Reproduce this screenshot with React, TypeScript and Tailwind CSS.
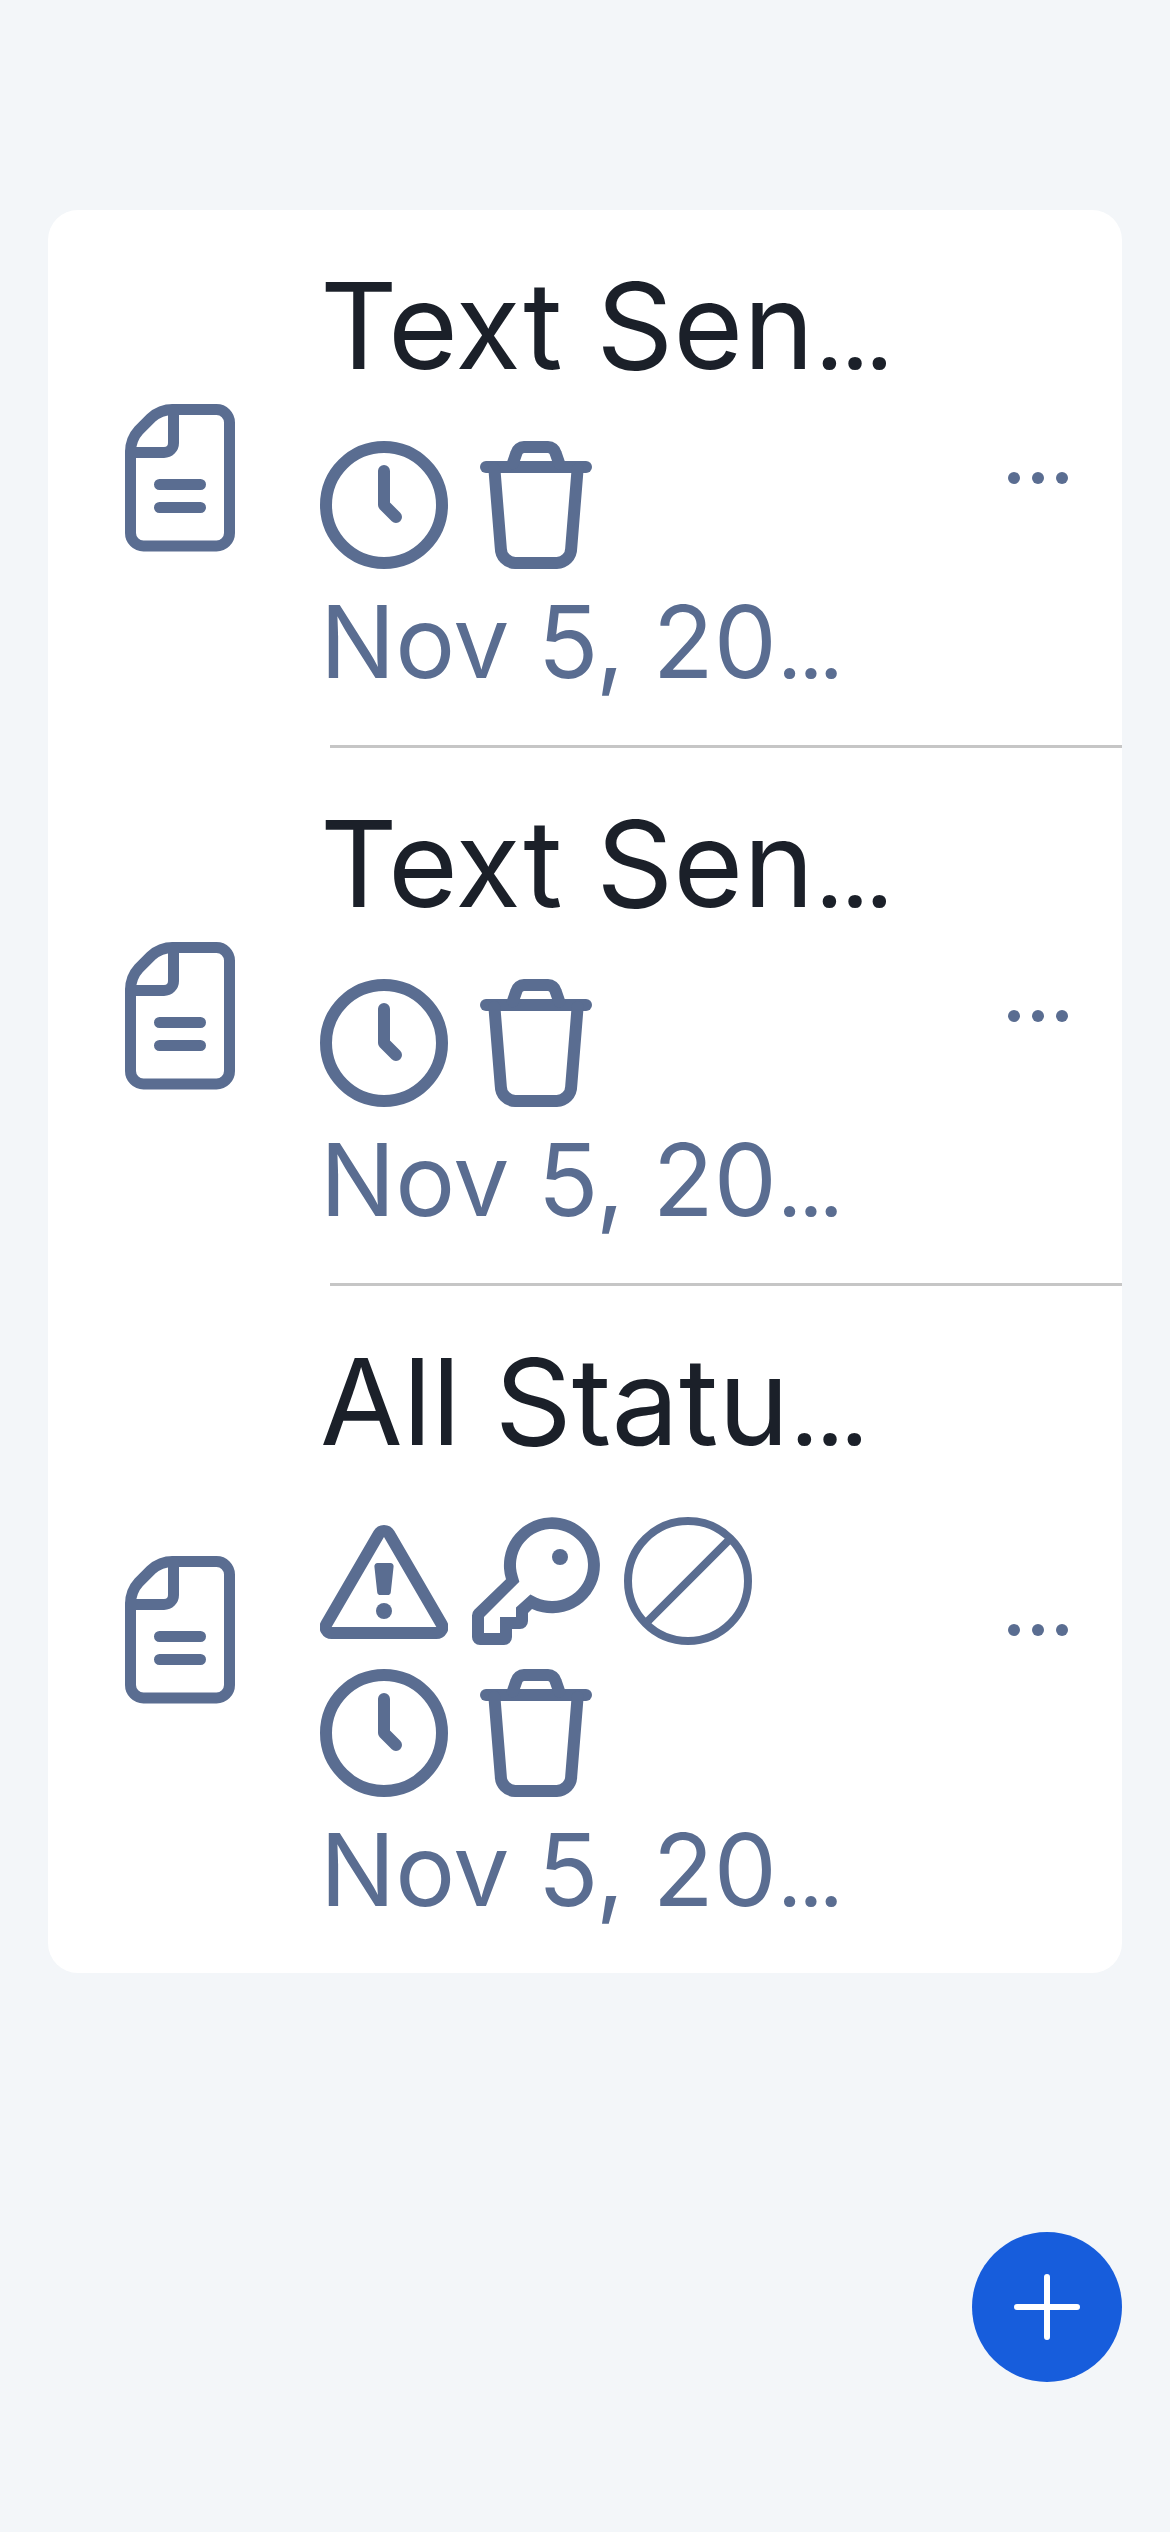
import type { ReactNode } from "react";

type Status = "warning" | "key" | "disabled" | "clock" | "trash";

type SendItem = { id: number; title: string; date: string; statuses: Status[] };

const items: SendItem[] = [
  { id: 1, title: "Text Sen", date: "Nov 5, 20", statuses: ["clock", "trash"] },
  { id: 2, title: "Text Sen", date: "Nov 5, 20", statuses: ["clock", "trash"] },
  {
    id: 3,
    title: "All Statu",
    date: "Nov 5, 20",
    statuses: ["warning", "key", "disabled", "clock", "trash"],
  },
];

const glyphs: Record<Status, ReactNode> = {
  clock: (
    <g strokeWidth="1.5">
      <circle cx="8" cy="8" r="7.25" />
      <path d="M8 3.75V8l1.5 1.5" />
    </g>
  ),
  trash: (
    <g strokeWidth="1.5">
      <path d="M1.75 3.25h12.5" />
      <path d="M2.8 3.5 3.6 13.4A1.85 1.85 0 0 0 5.4 15.25h5.2a1.85 1.85 0 0 0 1.8-1.85l.8-9.9" />
      <path d="M5.1 2.8 5.55 1.5A1 1 0 0 1 6.5.75h3a1 1 0 0 1 .95.75l.45 1.3" />
    </g>
  ),
  warning: (
    <>
      <path
        strokeWidth="1.5"
        d="M7.35 2.12a.75.75 0 0 1 1.3 0l6.54 11.25a.75.75 0 0 1-.65 1.13H1.46a.75.75 0 0 1-.65-1.13Z"
      />
      <path
        fill="currentColor"
        stroke="none"
        d="M7.2 5.75h1.6a.4.4 0 0 1 .4.44L8.85 9.4a.4.4 0 0 1-.4.35h-.9a.4.4 0 0 1-.4-.35L6.8 6.19a.4.4 0 0 1 .4-.44Z"
      />
      <circle cx="8" cy="11.75" r="1" fill="currentColor" stroke="none" />
    </>
  ),
  key: (
    <g fill="currentColor" stroke="none">
      <path
        fillRule="evenodd"
        d="M4.25 7.79A6 6 0 1 1 7.5 11.5L7 12v1a1 1 0 0 1-1 1H5v1a1 1 0 0 1-1 1H1a1 1 0 0 1-1-1v-2.7a1 1 0 0 1 .3-.7ZM5.92 8.1 1.5 12.5v2h2v-2h2v-1.2L7.3 9.7l.8.38A4.5 4.5 0 1 0 5.72 7.4Z"
      />
      <circle cx="11" cy="5" r="1" />
    </g>
  ),
  disabled: (
    <g strokeWidth="1">
      <circle cx="8" cy="8" r="7.5" />
      <path d="M2.8 13.2 13.2 2.8" />
    </g>
  ),
};

const labels: Record<Status, string> = {
  clock: "Expired",
  trash: "Pending deletion",
  warning: "Disabled",
  key: "Password protected",
  disabled: "Max access count reached",
};

function StatusIcon({ status }: { status: Status }) {
  return (
    <svg
      role="img"
      aria-label={labels[status]}
      viewBox="0 0 16 16"
      className="size-32 shrink-0"
      fill="none"
      stroke="currentColor"
      strokeLinecap="round"
      strokeLinejoin="round"
    >
      {glyphs[status]}
    </svg>
  );
}

function DocumentIcon() {
  return (
    <svg
      aria-hidden="true"
      viewBox="0 0 110 148"
      className="h-[148px] w-[110px]"
      fill="none"
      stroke="currentColor"
      strokeWidth="11"
      strokeLinecap="round"
    >
      <path d="M5.5 48C5.5 39 8.5 32 14 26L26 14C32 8.5 39 5.5 48 5.5H91.5a13 13 0 0 1 13 13V129a13 13 0 0 1-13 13h-73a13 13 0 0 1-13-13Z" />
      <path d="M48.5 5.5V39a9.5 9.5 0 0 1-9.500 9.500H5.5" />
      <path d="M34.5 80.5h41M34.5 103.5h41" />
    </svg>
  );
}

/* Roboto has a tighter ellipsis than Inter. */
function Ellipsis() {
  return <span className="font-['Roboto',sans-serif]">…</span>;
}

function SendRow({ item }: { item: SendItem }) {
  return (
    <div className="flex items-stretch">
      <div className="flex w-[264px] shrink-0 items-center justify-center">
        <DocumentIcon />
      </div>
      <div className="min-w-0 flex-1 pt-9 pr-16 pb-[30px] pl-2">
        <h2 className="h-[159px] text-[120px] leading-[159px] whitespace-nowrap text-[#1b2029]">
          {item.title}
          <Ellipsis />
        </h2>
        <div className="mt-9 flex flex-wrap gap-6">
          {item.statuses.map((status) => (
            <StatusIcon key={status} status={status} />
          ))}
        </div>
        <p className="h-[146px] text-[100px] leading-[146px] whitespace-nowrap">
          {item.date}
          <Ellipsis />
        </p>
      </div>
      <button type="button" aria-label="More options" className="flex w-[168px] shrink-0 items-center justify-center">
        <svg aria-hidden="true" viewBox="0 0 60 12" className="h-3 w-[60px]" fill="currentColor">
          <circle cx="6" cy="6" r="6" />
          <circle cx="30" cy="6" r="6" />
          <circle cx="54" cy="6" r="6" />
        </svg>
      </button>
    </div>
  );
}

export default function App() {
  return (
    <main className="flex min-h-screen flex-col bg-[#f3f6f9] px-12 pt-[210px] pb-[150px] font-['Inter',sans-serif] text-[#5a6d91]">
      <ul className="overflow-hidden rounded-[30px] bg-white">
        {items.map((item, index) => (
          <li key={item.id}>
            <SendRow item={item} />
            {index < items.length - 1 && <div className="ml-[282px] h-[3px] bg-[#c6c6c6]" />}
          </li>
        ))}
      </ul>
      <button
        type="button"
        aria-label="Add item"
        className="mt-auto flex size-[150px] items-center justify-center self-end rounded-full bg-[#175ddc] text-white"
      >
        <svg
          aria-hidden="true"
          viewBox="0 0 66 66"
          className="size-[66px]"
          stroke="currentColor"
          strokeWidth="6"
          strokeLinecap="round"
        >
          <path d="M33 3v60M3 33h60" />
        </svg>
      </button>
    </main>
  );
}
